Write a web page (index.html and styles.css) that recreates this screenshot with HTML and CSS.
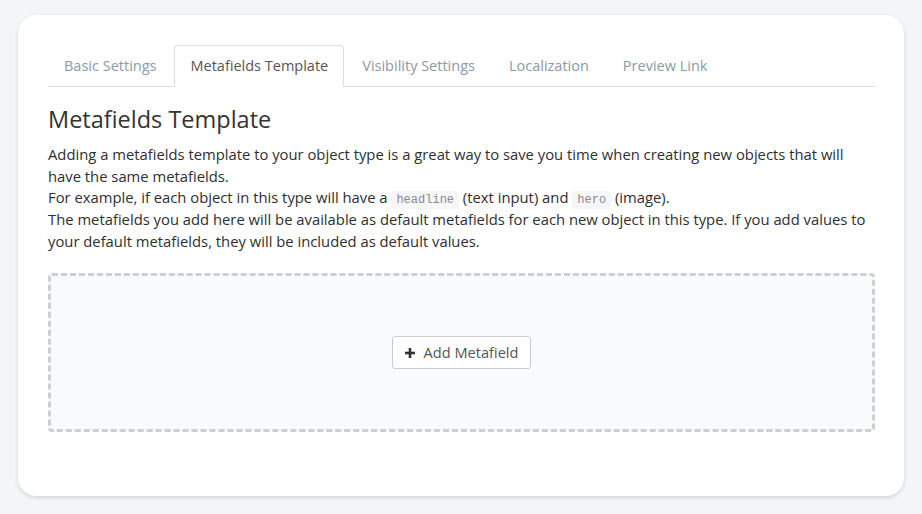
FILE: index.html
```html
<!DOCTYPE html>
<html>
<head>
<meta charset="utf-8">
<link rel="stylesheet" href="styles.css">
</head>
<body>
<div class="card">
  <ul class="tabs">
    <li class="tab">Basic Settings</li>
    <li class="tab active">Metafields Template</li>
    <li class="tab">Visibility Settings</li>
    <li class="tab">Localization</li>
    <li class="tab">Preview Link</li>
  </ul>
  <h3 class="title">Metafields Template</h3>
  <p class="desc">Adding a metafields template to your object type is a great way to save you time when creating new objects that will have the same metafields.<br>For example, if each object in this type will have a <code>headline</code> (text input) and <code>hero</code> (image).<br>The metafields you add here will be available as default metafields for each new object in this type. If you add values to your default metafields, they will be included as default values.</p>
  <div class="dropzone">
    <button class="btn"><svg class="plus" width="10" height="10" viewBox="0 0 10 10"><rect x="3.7" y="0" width="2.6" height="10" fill="#333"/><rect x="0" y="3.7" width="10" height="2.6" fill="#333"/></svg>Add Metafield</button>
  </div>
</div>
</body>
</html>
```
FILE: styles.css
```css
html, body {
  margin: 0;
  padding: 0;
}
body {
  background: #f3f5f7;
  font-family: "Open Sans", "Liberation Sans", sans-serif;
  padding: 15px 18px 17px 18px;
}
.card {
  background: #fff;
  border-radius: 18px;
  padding: 30px 29px 64px 30px;
  box-shadow: 0 2px 4px rgba(0,0,0,0.12), 0 0 1px rgba(0,0,0,0.06);
}
.tabs {
  list-style: none;
  margin: 0;
  padding: 0;
  display: flex;
  border-bottom: 1px solid #ddd;
}
.tab {
  padding: 10px 15px;
  line-height: 20px;
  font-size: 14.5px;
  color: #8a9ba8;
  margin-right: 2px;
  margin-bottom: -1px;
  border: 1px solid transparent;
  border-radius: 4px 4px 0 0;
}
.tab.active {
  color: #555;
  background: #fff;
  border-color: #ddd;
  border-bottom-color: #fff;
}
.title {
  font-size: 23.5px;
  font-weight: 400;
  line-height: 1.1;
  color: #333;
  margin: 20px 0 11px;
}
.desc {
  margin: 0 0 21px;
  font-size: 14.8px;
  line-height: 21.7px;
  color: #2f2f2f;
}
code {
  font-family: "Liberation Mono", "DejaVu Sans Mono", monospace;
  font-size: 12px;
  line-height: 14px;
  color: #8a8a8a;
  background: #f5f6f8;
  padding: 2px 5px;
  border-radius: 4px;
}
.dropzone {
  border: 3px dashed #cfcfcf;
  border-radius: 4px;
  background: #f9fafb;
  height: 153px;
  display: flex;
  align-items: center;
  justify-content: center;
}
.btn {
  font-family: "Open Sans", "Liberation Sans", sans-serif;
  font-size: 14.6px;
  color: #555;
  background: #fff;
  border: 1px solid #ccc;
  border-radius: 3px;
  padding: 6px 12px;
  line-height: 19px;
  display: flex;
  align-items: center;
  gap: 9px;
}
```
